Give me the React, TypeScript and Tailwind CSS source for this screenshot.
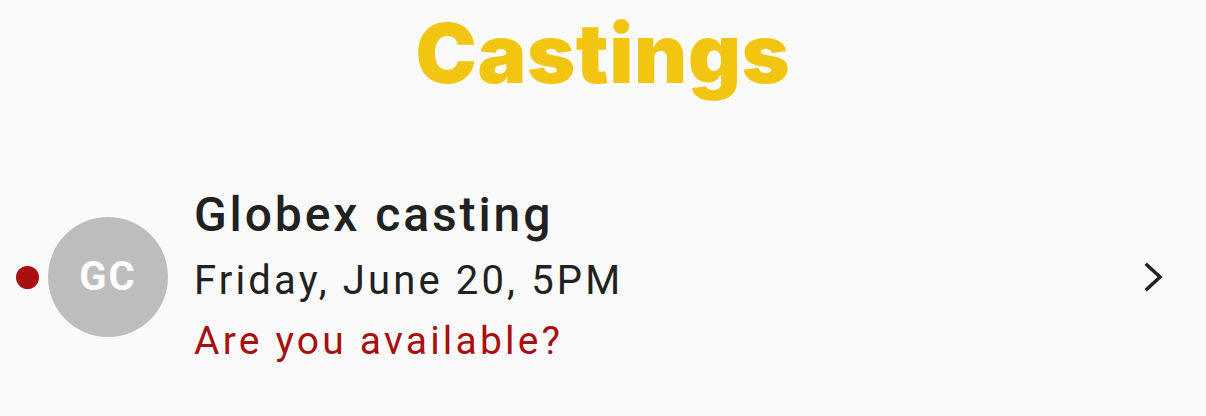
import React from "react";

export default function App() {
  return (
    <div className="w-[1206px] h-[416px] bg-[#fafafa] overflow-hidden" style={{ fontFamily: "Roboto, 'Noto Sans', sans-serif" }}>
      <div className="flex justify-center pt-[4px]">
        <h1 className="text-[82px] leading-[100px] font-black text-[#f2c511] tracking-[0.6px]" style={{ fontFamily: "Inter, sans-serif" }}>
          Castings
        </h1>
      </div>
      <div className="flex items-center mt-[78px] pl-[16px] pr-[39px]">
        <div className="w-[23px] h-[23px] rounded-full bg-[#a80f0f]" />
        <div className="ml-[9px] w-[120px] h-[120px] rounded-full bg-[#bdbdbd] flex items-center justify-center">
          <span className="text-white text-[40px] leading-none font-bold tracking-[2px]">GC</span>
        </div>
        <div className="ml-[26px] flex flex-col flex-1 pb-[4px]">
          <div className="text-[#212121] text-[48px] leading-[66px] font-medium tracking-[2.9px]">Globex casting</div>
          <div className="text-[#212121] text-[40px] leading-[65.5px] tracking-[3.15px]">Friday, June 20, 5PM</div>
          <div className="text-[#a80f0f] text-[39px] leading-[55.3px] tracking-[3.2px]">Are you available?</div>
        </div>
        <svg width="24" height="30" viewBox="0 0 24 30" fill="none" stroke="#212121" strokeWidth="3.5" strokeLinecap="square">
          <path d="M4 3 L17 15 L4 27" />
        </svg>
      </div>
    </div>
  );
}
